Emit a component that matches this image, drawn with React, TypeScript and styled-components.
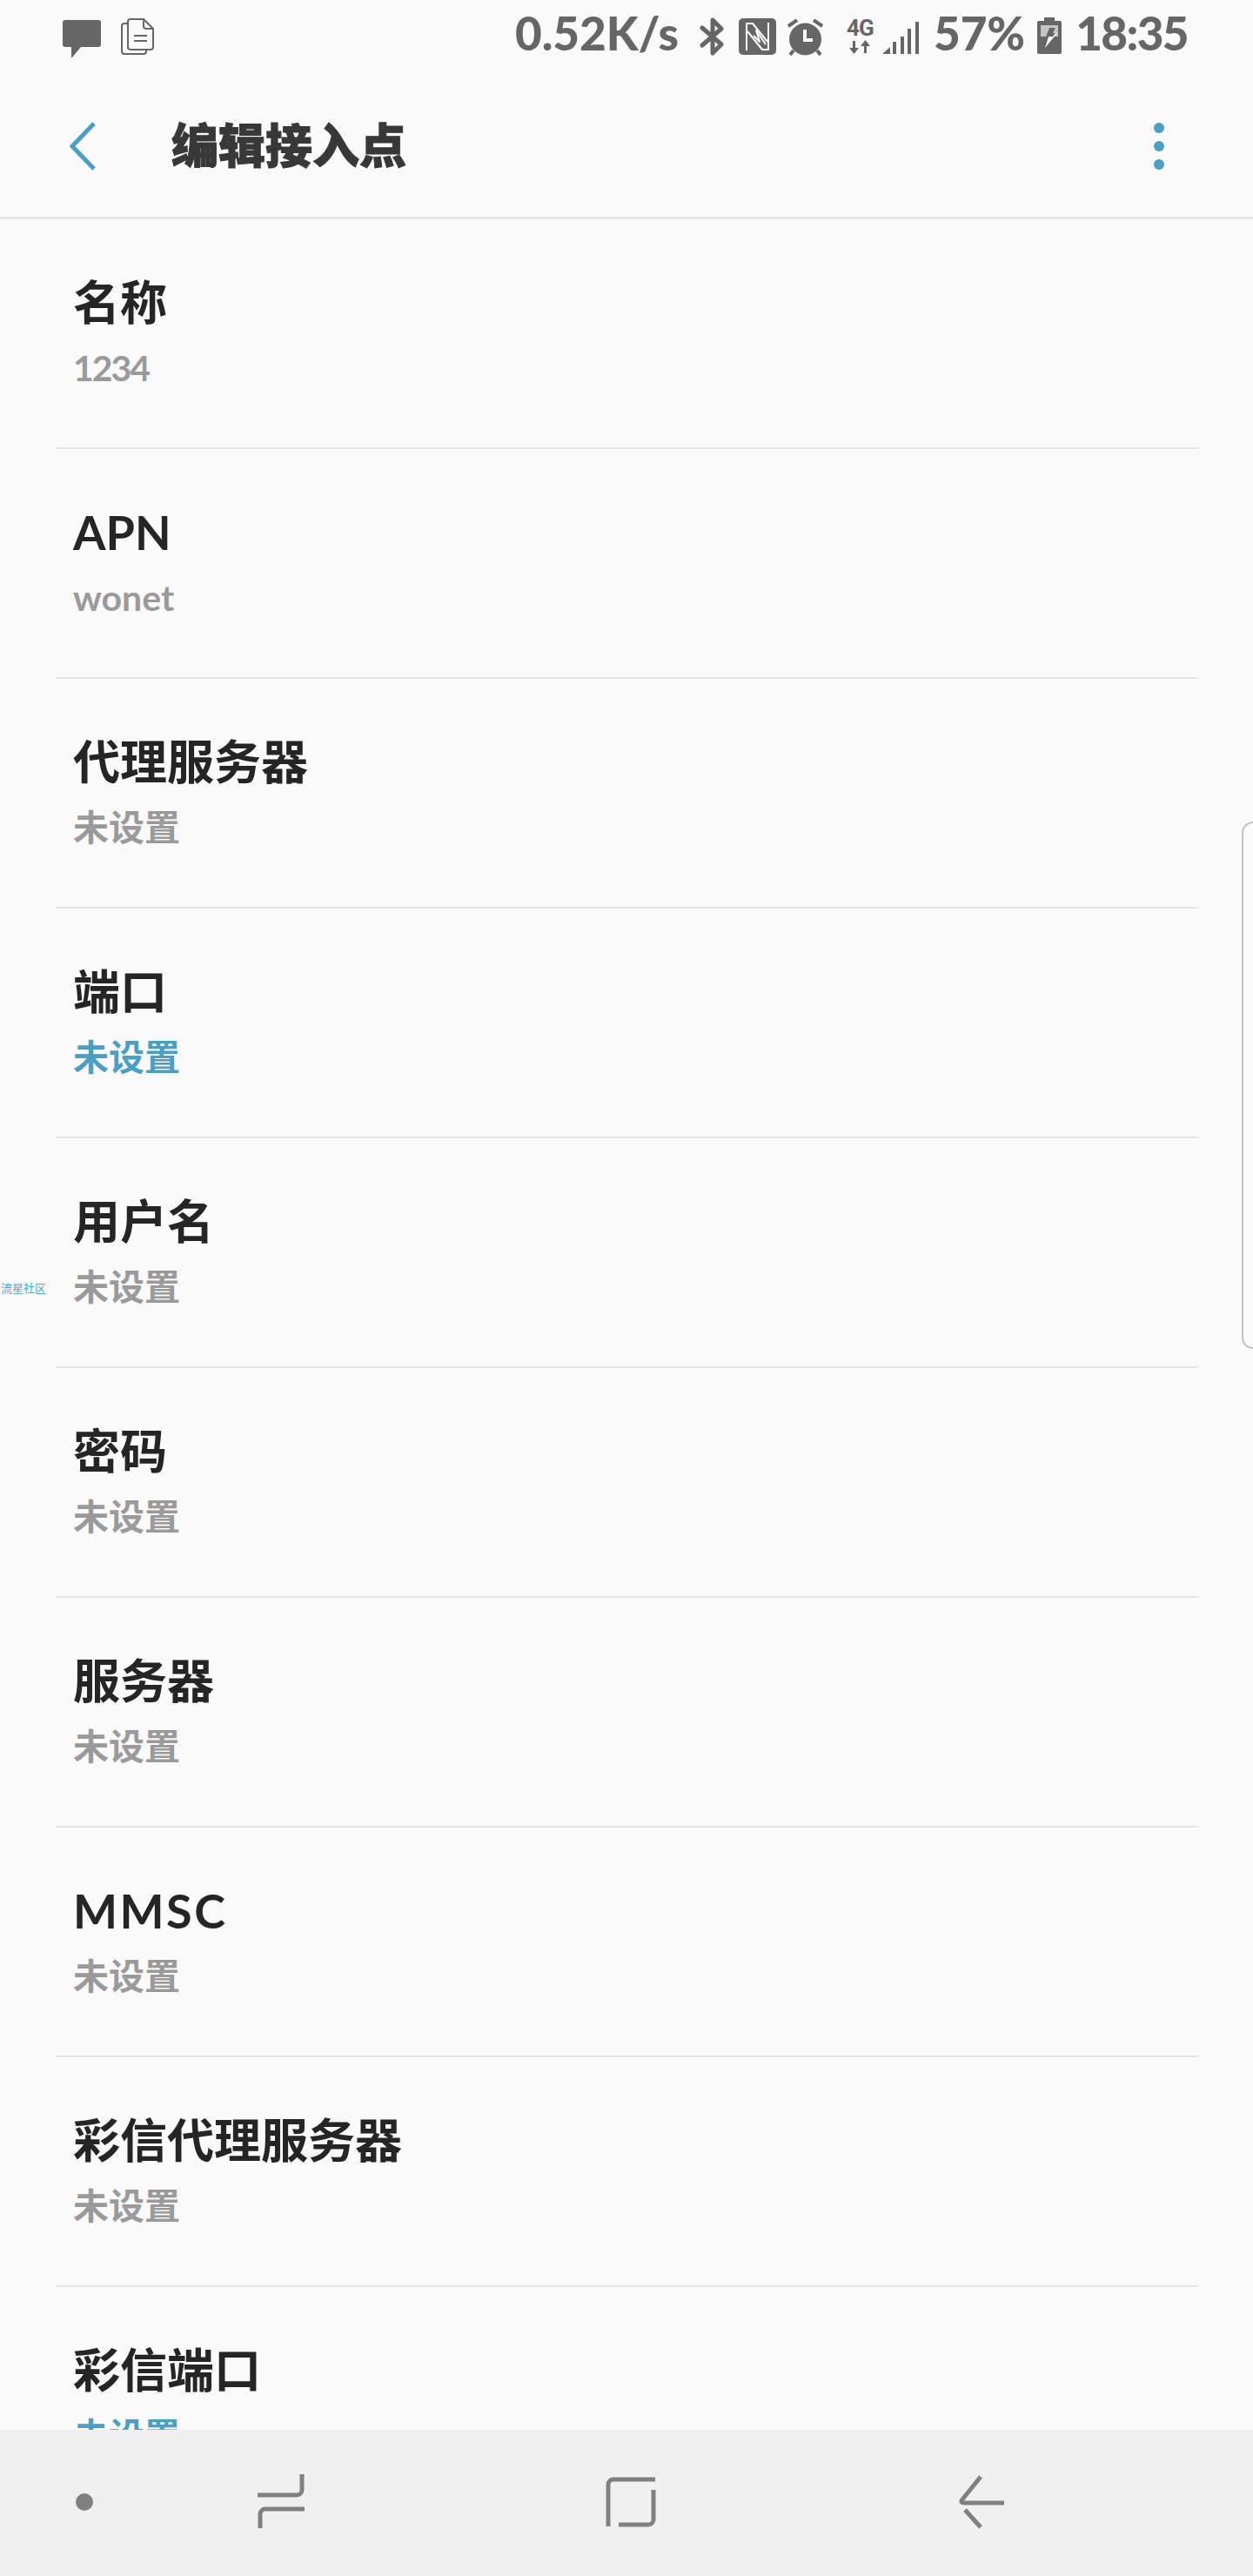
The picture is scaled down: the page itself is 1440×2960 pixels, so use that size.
import React from "react";
import styled, { createGlobalStyle } from "styled-components";

const CJK = `"Noto Sans CJK SC", sans-serif`;
const LATIN_CJK = `Lato, "Noto Sans CJK SC", sans-serif`;
const INK = "#666666";

const Global = createGlobalStyle`
  html, body { margin: 0; padding: 0; background: #fafafa; }
`;

const Page = styled.div`
  position: relative;
  width: 1440px;
  height: 2960px;
  display: flex;
  flex-direction: column;
  overflow: hidden;
  background: #fafafa;
  font-family: ${LATIN_CJK};
`;

const StatusBar = styled.div`
  height: 80px;
  flex: none;
  display: flex;
  justify-content: space-between;
  padding: 0 75px 0 72px;
  box-sizing: border-box;
`;
const StatusGroup = styled.div`
  display: flex;
  align-items: flex-start;
`;
const StatusText = styled.span<{ $gap?: number; $tracking?: number }>`
  margin-left: ${(p) => p.$gap ?? 0}px;
  font-size: 53px;
  font-weight: 900;
  line-height: 76px;
  letter-spacing: ${(p) => p.$tracking ?? 0}px;
  color: ${INK};
  white-space: nowrap;
`;
const StatusIcon = styled.svg<{ $gap?: number; $top: number }>`
  display: block;
  flex: none;
  margin-left: ${(p) => p.$gap ?? 0}px;
  margin-top: ${(p) => p.$top}px;
`;
const NetworkType = styled.div<{ $gap: number }>`
  width: 33px;
  margin-left: ${(p) => p.$gap}px;
  margin-top: 18px;
  display: flex;
  flex-direction: column;
  align-items: center;
`;
const NetworkLabel = styled.span`
  font-family: Roboto, sans-serif;
  font-size: 26px;
  font-weight: 700;
  line-height: 28px;
  letter-spacing: -1px;
  color: ${INK};
`;

const Toolbar = styled.header`
  height: 172px;
  flex: none;
  box-sizing: border-box;
  border-bottom: 3px solid #e6e6e6;
  display: flex;
  align-items: center;
  padding: 7px 102px 0 78px;
`;
const BackButton = styled.svg`
  display: block;
  flex: none;
`;
const ToolbarTitle = styled.h1`
  flex: 1;
  margin: -7px 0 0 85px;
  font-family: ${CJK};
  font-size: 54px;
  font-weight: 900;
  line-height: 70px;
  color: #383838;
  -webkit-text-stroke: 1px #383838;
`;
const MoreMenu = styled.div`
  display: flex;
  flex-direction: column;
  gap: 9px;
`;
const MoreDot = styled.span`
  width: 12px;
  height: 12px;
  border-radius: 50%;
  background: #4a9fc2;
`;

const List = styled.main`
  flex: 1;
  min-height: 0;
  overflow: hidden;
`;
const Row = styled.section`
  position: relative;
  height: 264px;
  box-sizing: border-box;
  margin: 0 62px 0 64px;
  padding: 0 0 4px 20px;
  border-bottom: 2px solid #e6e6e6;
  display: flex;
  flex-direction: column;
  justify-content: center;
`;
const RowTitle = styled.div<{ $tracking?: number }>`
  font-size: 54px;
  font-weight: 700;
  line-height: 72px;
  letter-spacing: ${(p) => p.$tracking ?? 0}px;
  color: #252525;
`;
const RowValue = styled.div<{ $accent?: boolean; $tracking?: number }>`
  margin-top: 11px;
  font-size: 41px;
  font-weight: 700;
  line-height: 56px;
  letter-spacing: ${(p) => p.$tracking ?? 0}px;
  color: ${(p) => (p.$accent ? "#4a9fc2" : "#9a9a9a")};
`;
const Watermark = styled.span`
  position: absolute;
  left: 1px;
  top: 1472px;
  font-family: ${CJK};
  font-size: 13px;
  line-height: 16px;
  color: #4aa6e6;
`;
const EdgeHandle = styled.div`
  position: absolute;
  right: 0;
  top: 944px;
  width: 13px;
  height: 606px;
  box-sizing: border-box;
  border: 2px solid #c2c2c2;
  border-right: none;
  border-radius: 14px 0 0 14px;
`;

const NavBar = styled.nav`
  height: 168px;
  flex: none;
  background: #f0f0f0;
`;
const NavIcons = styled.svg`
  display: block;
`;

type RowData = {
  title: string;
  value: string;
  accent?: boolean;
  titleTracking?: number;
  valueTracking?: number;
};

const rows: RowData[] = [
  { title: "名称", value: "1234", valueTracking: -2 },
  { title: "APN", value: "wonet" },
  { title: "代理服务器", value: "未设置" },
  { title: "端口", value: "未设置", accent: true },
  { title: "用户名", value: "未设置" },
  { title: "密码", value: "未设置" },
  { title: "服务器", value: "未设置" },
  { title: "MMSC", value: "未设置", titleTracking: 2.5 },
  { title: "彩信代理服务器", value: "未设置" },
  { title: "彩信端口", value: "未设置", accent: true },
];

export default function App() {
  return (
    <Page>
      <Global />
      <StatusBar>
        <StatusGroup>
          <StatusIcon $top={23} width="44" height="44" viewBox="0 0 44 44">
            <path d="M3 0h38a3 3 0 0 1 3 3v25a3 3 0 0 1-3 3H21L10 44V31H3a3 3 0 0 1-3-3V3a3 3 0 0 1 3-3z" fill={INK} />
          </StatusIcon>
          <StatusIcon $gap={23} $top={21} width="38" height="43" viewBox="0 0 38 43" fill="none" stroke={INK} strokeWidth="2">
            <path d="M7 6H4a3 3 0 0 0-3 3v29a3 3 0 0 0 3 3h22a3 3 0 0 0 3-3v-2" />
            <path d="M11 1h15l11 11v21a3 3 0 0 1-3 3H11a3 3 0 0 1-3-3V4a3 3 0 0 1 3-3z" />
            <path d="M26 1v8a3 3 0 0 0 3 3h8M15 20h15M15 26h15" />
          </StatusIcon>
        </StatusGroup>
        <StatusGroup>
          <StatusText>0.52K/s</StatusText>
          <StatusIcon $gap={24} $top={20} width="28" height="44" viewBox="0 0 28 44" fill="none" stroke={INK} strokeWidth="5" strokeLinejoin="round" strokeLinecap="round">
            <path d="M3 12l22 19-10 10V3l10 10L3 32" />
          </StatusIcon>
          <StatusIcon $gap={17} $top={21} width="43" height="42" viewBox="0 0 43 42">
            <rect width="43" height="42" rx="5" fill={INK} />
            <path d="M9 37V6h7l17 21M34 5v31h-7L10 15M17 20l7 7-4-13 11 16" fill="none" stroke="#fafafa" strokeWidth="2" strokeLinejoin="round" />
          </StatusIcon>
          <StatusIcon $gap={12} $top={22} width="43" height="42" viewBox="0 0 43 42">
            <circle cx="21.5" cy="23" r="18.500" fill={INK} />
            <path d="M12 1L2 8M31 1l10 7M8 36l-4 5M35 36l4 5" stroke={INK} strokeWidth="4" />
            <path d="M21 12v12h9" fill="none" stroke="#fafafa" strokeWidth="4" />
          </StatusIcon>
          <NetworkType $gap={25}>
            <NetworkLabel>4G</NetworkLabel>
            <svg width="26" height="16" viewBox="0 0 26 16" fill={INK}>
              <path d="M5 1h3v8h4l-5.500 7L1 9h4zM18 15h3V7h4L19.500 0 14 7h4z" />
            </svg>
          </NetworkType>
          <StatusIcon $gap={9} $top={25} width="43" height="37" viewBox="0 0 43 37" fill={INK}>
            <path d="M0 37L9 29v8zM12 23h4v14h-4zM21 17h4v20h-4zM29 8h4v29h-4zM38 0h4v37h-4z" />
          </StatusIcon>
          <StatusText $gap={16}>57%</StatusText>
          <StatusIcon $gap={14} $top={20} width="28" height="42" viewBox="0 0 28 42">
            <path d="M8 0h12v4h6a2 2 0 0 1 2 2v34a2 2 0 0 1-2 2H2a2 2 0 0 1-2-2V6a2 2 0 0 1 2-2h6z" fill={INK} />
            <rect x="4" y="9" width="20" height="13" fill="#c4c4c4" />
            <path d="M14 12h7l-3 6h5L9 35l4-13H10z" fill="#fafafa" />
            <path d="M14 12h7l-3 6h3l-3 4H10z" fill={INK} />
          </StatusIcon>
          <StatusText $gap={16} $tracking={-1.6}>18:35</StatusText>
        </StatusGroup>
      </StatusBar>
      <Toolbar>
        <BackButton width="34" height="58" viewBox="0 0 34 58" fill="none">
          <path d="M30 3L5 29l25 26" stroke="#4a9fc2" strokeWidth="5" />
        </BackButton>
        <ToolbarTitle>编辑接入点</ToolbarTitle>
        <MoreMenu>
          <MoreDot />
          <MoreDot />
          <MoreDot />
        </MoreMenu>
      </Toolbar>
      <List>
        {rows.map((r) => (
          <Row key={r.title}>
            <RowTitle $tracking={r.titleTracking}>{r.title}</RowTitle>
            <RowValue $accent={r.accent} $tracking={r.valueTracking}>{r.value}</RowValue>
          </Row>
        ))}
      </List>
      <NavBar>
        <NavIcons width="1440" height="168" viewBox="0 0 1440 168" fill="none" stroke="#808080" strokeWidth="5">
          <circle cx="97" cy="83" r="10" fill="#808080" stroke="none" />
          <path d="M347 51v18a6 6 0 0 1-6 6h-45M350 91h-45a6 6 0 0 0-6 6v16" />
          <path d="M753 57h-48a6 6 0 0 0-6 6v48M751 69v34a6 6 0 0 1-6 6h-34" />
          <path d="M1127 54l-21 26q-3 4 2 4h46M1109 92l18 20" />
        </NavIcons>
      </NavBar>
      <Watermark>流星社区</Watermark>
      <EdgeHandle />
    </Page>
  );
}
